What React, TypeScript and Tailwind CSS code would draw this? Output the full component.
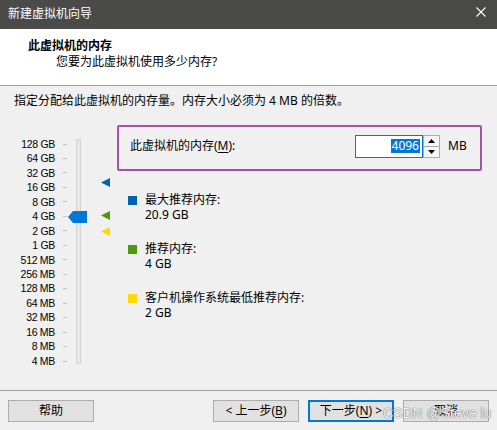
import React from 'react';

const scale = [
  '128 GB', '64 GB', '32 GB', '16 GB', '8 GB', '4 GB', '2 GB', '1 GB',
  '512 MB', '256 MB', '128 MB', '64 MB', '32 MB', '16 MB', '8 MB', '4 MB',
];

const legend = [
  { color: 'bg-[#0063b1]', label: '最大推荐内存:', value: '20.9 GB' },
  { color: 'bg-[#4a9a0c]', label: '推荐内存:', value: '4 GB' },
  { color: 'bg-[#ffd800]', label: '客户机操作系统最低推荐内存:', value: '2 GB' },
];

function Marker({ color, top }: { color: string; top: string }) {
  return (
    <svg className={`absolute left-[101px] ${top}`} width="9" height="9" viewBox="0 0 9 9">
      <polygon points="0,4.5 9,0 9,9" fill={color} />
    </svg>
  );
}

function MemorySlider() {
  return (
    <div className="relative w-[117px] h-[245px] shrink-0 flex">
      <div className="pt-[11.8px] flex flex-col">
        {scale.map((s) => (
          <div key={s} className="h-[14.47px] flex items-center">
            <span className="w-[55px] text-right text-[10.5px] leading-none tracking-[-0.3px] font-['Liberation_Sans',sans-serif]">
              {s}
            </span>
            <span className="ml-[8px] w-[4px] h-px bg-[#c4c4c4]" />
          </div>
        ))}
      </div>
      <div className="ml-[9px] mt-[14px] w-[5px] h-[225px] bg-[#e7e7e7] border border-[#d4d4d4]" />
      {/* thumb */}
      <svg className="absolute left-[68px] top-[86px]" width="19" height="12" viewBox="0 0 19 12">
        <polygon points="0,6 5,0 19,0 19,12 5,12" fill="#0078d7" />
      </svg>
      <Marker color="#0063b1" top="top-[53px]" />
      <Marker color="#4a9a0c" top="top-[86px]" />
      <Marker color="#ffd800" top="top-[102px]" />
    </div>
  );
}

function Button({ children, primary }: { children: React.ReactNode; primary?: boolean }) {
  return (
    <button
      className={`w-[86px] h-[22px] bg-[#e1e1e1] text-[12px] leading-none flex items-center justify-center ${
        primary ? 'border-2 border-[#0078d7]' : 'border border-[#adadad]'
      }`}
    >
      {children}
    </button>
  );
}

export default function App() {
  return (
    <div className="relative w-[497px] h-[430px] bg-[#f0f0f0] flex flex-col overflow-hidden text-black font-['Noto_Sans','Noto_Sans_CJK_SC',sans-serif] text-[12px]">
      {/* title bar */}
      <div className="h-[29px] bg-[#4a4a48] flex items-center justify-between pl-[8px] pr-[11px] text-white">
        <span className="leading-none -mt-[2px]">新建虚拟机向导</span>
        <svg width="10" height="10" viewBox="0 0 10 10" className="-mt-[5px]">
          <path d="M0.5 0.5 L9.5 9.5 M9.5 0.5 L0.5 9.5" stroke="#fff" strokeWidth="1.1" />
        </svg>
      </div>

      {/* header */}
      <div className="h-[57px] bg-white border-b border-[#a0a0a0] pt-[9px]">
        <div className="pl-[28px] leading-[16px] font-bold">此虚拟机的内存</div>
        <div className="pl-[56px] leading-[16px]">您要为此虚拟机使用多少内存?</div>
      </div>

      {/* body */}
      <div className="flex-1">
        <p className="pl-[14px] pt-[7px] leading-[16px]">指定分配给此虚拟机的内存量。内存大小必须为 4 MB 的倍数。</p>
        <div className="mt-[16px] flex">
          <MemorySlider />
          <div className="w-[365px]">
            <div className="h-[46px] border-2 border-[#a453aa] rounded-[2px] flex items-center pl-[11px] pr-[14px] pb-[4px]">
              <span className="leading-[16px]">
                此虚拟机的内存(<span className="underline underline-offset-2">M</span>):
              </span>
              <div className="ml-auto flex items-center">
                <div className="w-[68px] h-[23px] bg-white border border-[#0078d7] flex items-center justify-end pr-[2px]">
                  <span className="bg-[#0078d7] text-white leading-[14px] px-px">4096</span>
                </div>
                <div className="w-[17px] h-[23px] border border-[#adadad] bg-[#f5f5f5] flex flex-col">
                  <div className="flex-1 flex items-center justify-center border-b border-[#adadad]">
                    <svg width="7" height="4" viewBox="0 0 7 4"><polygon points="3.5,0 7,4 0,4" fill="#000" /></svg>
                  </div>
                  <div className="flex-1 flex items-center justify-center">
                    <svg width="7" height="4" viewBox="0 0 7 4"><polygon points="0,0 7,0 3.5,4" fill="#000" /></svg>
                  </div>
                </div>
                <span className="ml-[8px] w-[18px] leading-none">MB</span>
              </div>
            </div>

            <div className="mt-[21px] pl-[11px] flex flex-col gap-[19px]">
              {legend.map((l) => (
                <div key={l.label} className="flex">
                  <div className="h-[15px] flex items-center">
                    <span className={`w-[9px] h-[9px] ${l.color} mt-[2px]`} />
                  </div>
                  <div className="ml-[8px] leading-[15px]">
                    <div>{l.label}</div>
                    <div>{l.value}</div>
                  </div>
                </div>
              ))}
            </div>
          </div>
        </div>
      </div>

      {/* footer */}
      <div className="h-[40px] border-t border-[#a0a0a0] pt-[9px] px-[8px] flex items-start">
        <Button>帮助</Button>
        <div className="ml-auto flex gap-[9px]">
          <Button>
            &lt; 上一步(<span className="underline underline-offset-2">B</span>)
          </Button>
          <Button primary>
            下一步(<span className="underline underline-offset-2">N</span>) &gt;
          </Button>
          <Button>取消</Button>
        </div>
      </div>

      {/* watermark */}
      <span className="absolute left-[383px] top-[404px] text-[14px] leading-[18px] font-['Liberation_Sans',sans-serif] text-[#f4f4f4] [text-shadow:0_0_1px_#6a6a6a,0_0_1px_#6a6a6a]">
        CSDN @Steve lu
      </span>
    </div>
  );
}
